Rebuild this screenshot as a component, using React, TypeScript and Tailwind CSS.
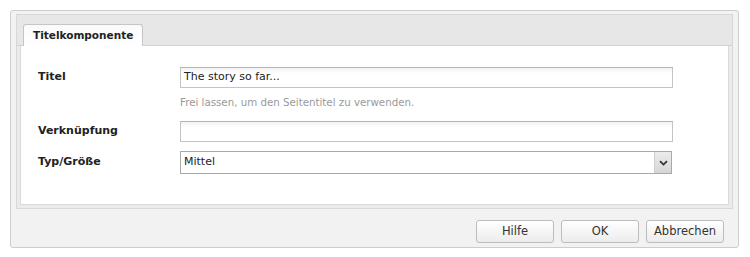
import React from "react";

const font = { fontFamily: '"DejaVu Sans", Verdana, sans-serif' };

const Field = ({ value }: { value?: string }) => (
  <div className="h-[21px] w-[493px] border border-[#c4c4c4] border-t-[#b5b5b5] bg-gradient-to-b from-[#f3f3f3] to-white to-[30%] px-[3px] flex items-center text-[11px] text-[#222]">
    {value}
  </div>
);

const Btn = ({ label }: { label: string }) => (
  <button className="h-[23px] w-[78px] rounded-[3px] border border-[#bdbdbd] bg-gradient-to-b from-white to-[#ececec] text-[11.5px] text-[#333] shadow-[inset_0_1px_0_#fff]">
    {label}
  </button>
);

export default function App() {
  return (
    <div className="w-[750px] h-[257px] bg-white pt-[10px] pl-[10px] pr-[11px] pb-[9px]" style={font}>
      <div className="h-full rounded-[3px] border border-[#cdcdcd] bg-[#f2f2f2] px-[5px] pt-[3px] flex flex-col">
        <div className="border border-[#d8d8d8] bg-[#ebebeb] flex flex-col">
          <div className="h-[31px] bg-[#e7e7e7] border-b border-[#d2d2d2] pl-[6px] pt-[9px] flex items-end">
            <div className="h-[22px] -mb-px px-[9px] flex items-center rounded-t-[3px] border border-b-0 border-[#c6c6c6] bg-gradient-to-b from-[#fafafa] to-white text-[10.5px] font-bold text-[#222]">
              Titelkomponente
            </div>
          </div>
          <div className="mx-[3px] mb-[3px] h-[159px] bg-white border border-t-0 border-[#dadada] pl-[17px] pt-[21px]">
            <div className="flex items-center">
              <div className="w-[142px] text-[11px] font-bold text-[#222]">Titel</div>
              <Field value="The story so far..." />
            </div>
            <div className="ml-[142px] mt-[7px] h-[14px] text-[10.25px] leading-[14px] text-[#999]">
              Frei lassen, um den Seitentitel zu verwenden.
            </div>
            <div className="flex items-center mt-[12px]">
              <div className="w-[142px] text-[11px] font-bold text-[#222]">Verknüpfung</div>
              <Field />
            </div>
            <div className="flex items-center mt-[9px]">
              <div className="w-[142px] text-[11px] font-bold text-[#222]">Typ/Größe</div>
              <div className="h-[23px] w-[492px] border border-[#a9a9a9] bg-white flex items-stretch">
                <div className="flex-1 px-[3px] flex items-center text-[11px] text-[#222]">Mittel</div>
                <div className="w-[17px] border-l border-[#cfcfcf] bg-gradient-to-b from-[#ececec] to-[#d6d6d6] flex items-center justify-center">
                  <svg width="9" height="6" viewBox="0 0 9 6">
                    <path d="M1 1.2 L4.5 4.6 L8 1.2" fill="none" stroke="#333" strokeWidth="1.8" />
                  </svg>
                </div>
              </div>
            </div>
          </div>
        </div>
        <div className="flex justify-end gap-[7px] pt-[11px] pr-[9px]">
          <Btn label="Hilfe" />
          <Btn label="OK" />
          <Btn label="Abbrechen" />
        </div>
      </div>
    </div>
  );
}
